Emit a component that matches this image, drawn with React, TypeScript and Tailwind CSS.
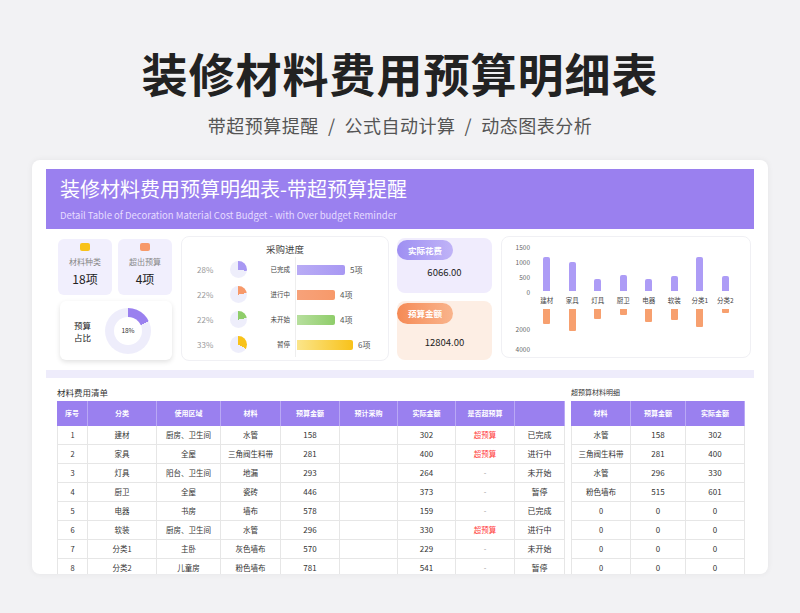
import React from "react";

const F = { fontFamily: '"Noto Sans CJK SC","Noto Sans",sans-serif' };

const rows = [
  ["1", "建材", "厨房、卫生间", "水管", "158", "302", "超预算", "已完成"],
  ["2", "家具", "全屋", "三角阀生料带", "281", "400", "超预算", "进行中"],
  ["3", "灯具", "阳台、卫生间", "地漏", "293", "264", "-", "未开始"],
  ["4", "厨卫", "全屋", "瓷砖", "446", "373", "-", "暂停"],
  ["5", "电器", "书房", "墙布", "578", "159", "-", "已完成"],
  ["6", "软装", "厨房、卫生间", "水管", "296", "330", "超预算", "进行中"],
  ["7", "分类1", "主卧", "灰色墙布", "570", "229", "-", "未开始"],
  ["8", "分类2", "儿童房", "粉色墙布", "781", "541", "-", "暂停"],
];
const right = [
  ["水管", "158", "302"],
  ["三角阀生料带", "281", "400"],
  ["水管", "296", "330"],
  ["粉色墙布", "515", "601"],
  ["0", "0", "0"],
  ["0", "0", "0"],
  ["0", "0", "0"],
  ["0", "0", "0"],
];
const cols = ["w-[31px]", "w-[69px]", "w-[64px]", "w-[60px]", "w-[59px]", "w-[58px]", "w-[58px]", "w-[59px]", "w-[50px]"];
const heads = ["序号", "分类", "使用区域", "材料", "预算金额", "预计采购", "实际金额", "是否超预算", ""];
const rcols = ["w-[60px]", "w-[55px]", "w-[59px]"];

const progress = [
  { p: "28%", l: "已完成", n: "5项", c: "#a898f3", c2: "#b9acf5", w: 48, deg: 100 },
  { p: "22%", l: "进行中", n: "4项", c: "#f7996a", c2: "#f7a27a", w: 38, deg: 80 },
  { p: "22%", l: "未开始", n: "4项", c: "#8fcd6a", c2: "#b7df9e", w: 38, deg: 80 },
  { p: "33%", l: "暂停", n: "6项", c: "#f8c21a", c2: "#fbe58a", w: 56, deg: 120 },
];

const chart = [
  ["建材", 1150, 15], ["家具", 1000, 22], ["灯具", 400, 10], ["厨卫", 530, 6],
  ["电器", 400, 13], ["软装", 520, 11], ["分类1", 1150, 18], ["分类2", 500, 4],
] as const;

function Pie({ color, deg }: { color: string; deg: number }) {
  return (
    <div className="w-[17px] h-[17px] rounded-full" style={{ background: `conic-gradient(${color} 0 ${deg}deg, #eeeefb ${deg}deg 360deg)` }} />
  );
}

export default function App() {
  return (
    <div style={F} className="w-[800px] h-[613px] bg-[#f2f2f4] flex flex-col items-center overflow-hidden text-[#333]">
      <div className="mt-[42px] text-[46px] leading-[60px] font-bold text-[#222] tracking-[1px]">装修材料费用预算明细表</div>
      <div className="mt-[10px] text-[18px] leading-[26px] text-[#555] tracking-[0.5px]">带超预算提醒 &nbsp;/&nbsp; 公式自动计算 &nbsp;/&nbsp; 动态图表分析</div>
      <div className="mt-[22px] w-[736px] h-[414px] bg-white rounded-[8px] shadow-[0_0_6px_rgba(0,0,0,0.06)] overflow-hidden px-[14px] pt-[9px] shrink-0">
        <div className="h-[60px] bg-[#9a80ef] px-[14px] pt-[6px]">
          <div className="text-white text-[20px] leading-[28px]">装修材料费用预算明细表-带超预算提醒</div>
          <div className="text-[#e6dcff] text-[9.5px] mt-[5px]">Detail Table of Decoration Material Cost Budget - with Over budget Reminder</div>
        </div>
        <div className="flex mt-[7px] h-[125px]">
          <div className="w-[128px] pl-[12px] flex flex-col gap-[6px]">
            <div className="flex gap-[6px] pt-[3px]">
              {[["材料种类", "18项", "#f8c21a"], ["超出预算", "4项", "#f7996a"]].map(([a, b, c]) => (
                <div key={a} className="w-[54px] h-[56px] bg-[#f1effd] rounded-[6px] flex flex-col items-center pt-[4px]">
                  <div className="w-[10px] h-[8px] rounded-[2px]" style={{ background: c }} />
                  <div className="text-[8px] text-[#888] mt-[5px]">{a}</div>
                  <div className="text-[12px] text-[#222] mt-[2px]">{b}</div>
                </div>
              ))}
            </div>
            <div className="ml-[2px] w-[112px] h-[59px] bg-white rounded-[6px] shadow-[0_2px_5px_rgba(0,0,0,0.12)] flex items-center px-[14px] gap-[14px]">
              <div className="text-[8.5px] leading-[12px] text-[#222]">预算<br />占比</div>
              <div className="w-[46px] h-[46px] rounded-full flex items-center justify-center" style={{ background: "conic-gradient(#9a80ef 0 65deg, #eeedfb 65deg 360deg)" }}>
                <div className="w-[28px] h-[28px] rounded-full bg-white flex items-center justify-center text-[6.5px]">18%</div>
              </div>
            </div>
          </div>
          <div className="ml-[7px] w-[208px] h-[125px] border border-[#f0f0f4] rounded-[8px] flex flex-col">
            <div className="text-center text-[9.5px] text-[#444] mt-[5px]">采购进度</div>
            <div className="flex flex-col gap-[8px] mt-[5px]">
              {progress.map((r) => (
                <div key={r.l} className="flex items-center h-[17px]">
                  <div className="w-[34px] pl-[15px] text-[8px] text-[#999]">{r.p}</div>
                  <div className="ml-[14px]"><Pie color={r.c} deg={r.deg} /></div>
                  <div className="w-[48px] text-right text-[6.5px] text-[#444] pr-[5px]">{r.l}</div>
                  <div className="border-l border-[#eee] h-[25px] flex items-center pl-[1px]">
                    <div className="h-[10px] rounded-r-[2px]" style={{ width: r.w, background: `linear-gradient(90deg, ${r.c2}, ${r.c})` }} />
                    <div className="ml-[5px] text-[8px] text-[#555]">{r.n}</div>
                  </div>
                </div>
              ))}
            </div>
          </div>
          <div className="ml-[8px] w-[95px] flex flex-col gap-[8px] pt-[2px]">
            <div className="h-[55px] bg-[#f0ecfd] rounded-[8px] pt-[2px]">
              <div className="w-[56px] h-[20px] rounded-full bg-gradient-to-r from-[#9e8ff2] to-[#c0b3f7] text-white text-[8.5px] font-bold flex items-center justify-center">实际花费</div>
              <div className="text-center text-[9.5px] text-[#222] mt-[5px]">6066.00</div>
            </div>
            <div className="h-[59px] bg-[#fdeee4] rounded-[8px] pt-[2px]">
              <div className="w-[56px] h-[21px] rounded-full bg-gradient-to-r from-[#f58a55] to-[#f9b48c] text-white text-[8.5px] font-bold flex items-center justify-center">预算金额</div>
              <div className="text-center text-[9.5px] text-[#222] mt-[11px]">12804.00</div>
            </div>
          </div>
          <div className="ml-[9px] w-[250px] h-[122px] border border-[#f0f0f4] rounded-[8px] flex pt-[6px] pl-[8px]">
            <div className="w-[20px] flex flex-col items-end text-[6.5px] text-[#666] leading-[8px]">
              <div>1500</div><div className="mt-[7px]">1000</div><div className="mt-[7px]">500</div><div className="mt-[7px]">0</div>
              <div className="mt-[29px]">2000</div><div className="mt-[12px]">4000</div>
            </div>
            <div className="flex ml-[4px]">
              {chart.map(([n, v, o]) => (
                <div key={n} className="w-[25.5px] flex flex-col items-center">
                  <div className="h-[46px] flex items-end mt-[2px]">
                    <div className="w-[7px] bg-[#ad9cf6] rounded-t-[2px]" style={{ height: (v / 1500) * 44 }} />
                  </div>
                  <div className="text-[6.5px] text-[#444] mt-[5px]">{n}</div>
                  <div className="w-[7px] bg-[#f7a06f] mt-[3px] rounded-b-[1px]" style={{ height: o }} />
                </div>
              ))}
            </div>
          </div>
        </div>
        <div className="h-[8px] bg-[#eeecfb] mt-[9px]" />
        <div className="flex mt-[8px] pl-[11px]">
          <div>
            <div className="text-[8.5px] text-[#333] h-[15px]">材料费用清单</div>
            <div className="flex bg-[#9a80ef] text-white text-[7px] font-bold h-[25px] items-stretch">
              {heads.map((h, i) => (
                <div key={i} className={`${cols[i]} flex items-center justify-center border-r border-[#b9a8f5]`}>{h}</div>
              ))}
            </div>
            {rows.map((r) => {
              const cells = [r[0], r[1], r[2], r[3], r[4], "", r[5], r[6], r[7]];
              return (
                <div key={r[0]} className="flex h-[19px] border-b border-[#e6e6e6] text-[7.5px] text-[#333]">
                  {cells.map((c, i) => (
                    <div key={i} className={`${cols[i]} flex items-center justify-center border-r border-[#e6e6e6] ${i === 0 ? "border-l" : ""} ${i === 7 && c === "超预算" ? "text-[#ff3b3b]" : ""} ${i === 7 && c === "-" ? "text-[#999]" : ""} ${(i === 4 || i === 6 || i === 8) ? "text-[8px]" : ""}`}>{c}</div>
                  ))}
                </div>
              );
            })}
          </div>
          <div className="ml-[6px]">
            <div className="text-[7px] text-[#333] h-[15px] pt-[1px]">超预算材料明细</div>
            <div className="flex bg-[#9a80ef] text-white text-[7px] font-bold h-[25px]">
              {["材料", "预算金额", "实际金额"].map((h, i) => (
                <div key={h} className={`${rcols[i]} flex items-center justify-center border-r border-[#b9a8f5]`}>{h}</div>
              ))}
            </div>
            {right.map((r, k) => (
              <div key={k} className="flex h-[19px] border-b border-[#e6e6e6] text-[8px] text-[#333]">
                {r.map((c, i) => (
                  <div key={i} className={`${rcols[i]} flex items-center justify-center border-r border-[#e6e6e6] ${i === 0 ? "border-l text-[7.5px]" : ""}`}>{c}</div>
                ))}
              </div>
            ))}
          </div>
        </div>
      </div>
    </div>
  );
}
